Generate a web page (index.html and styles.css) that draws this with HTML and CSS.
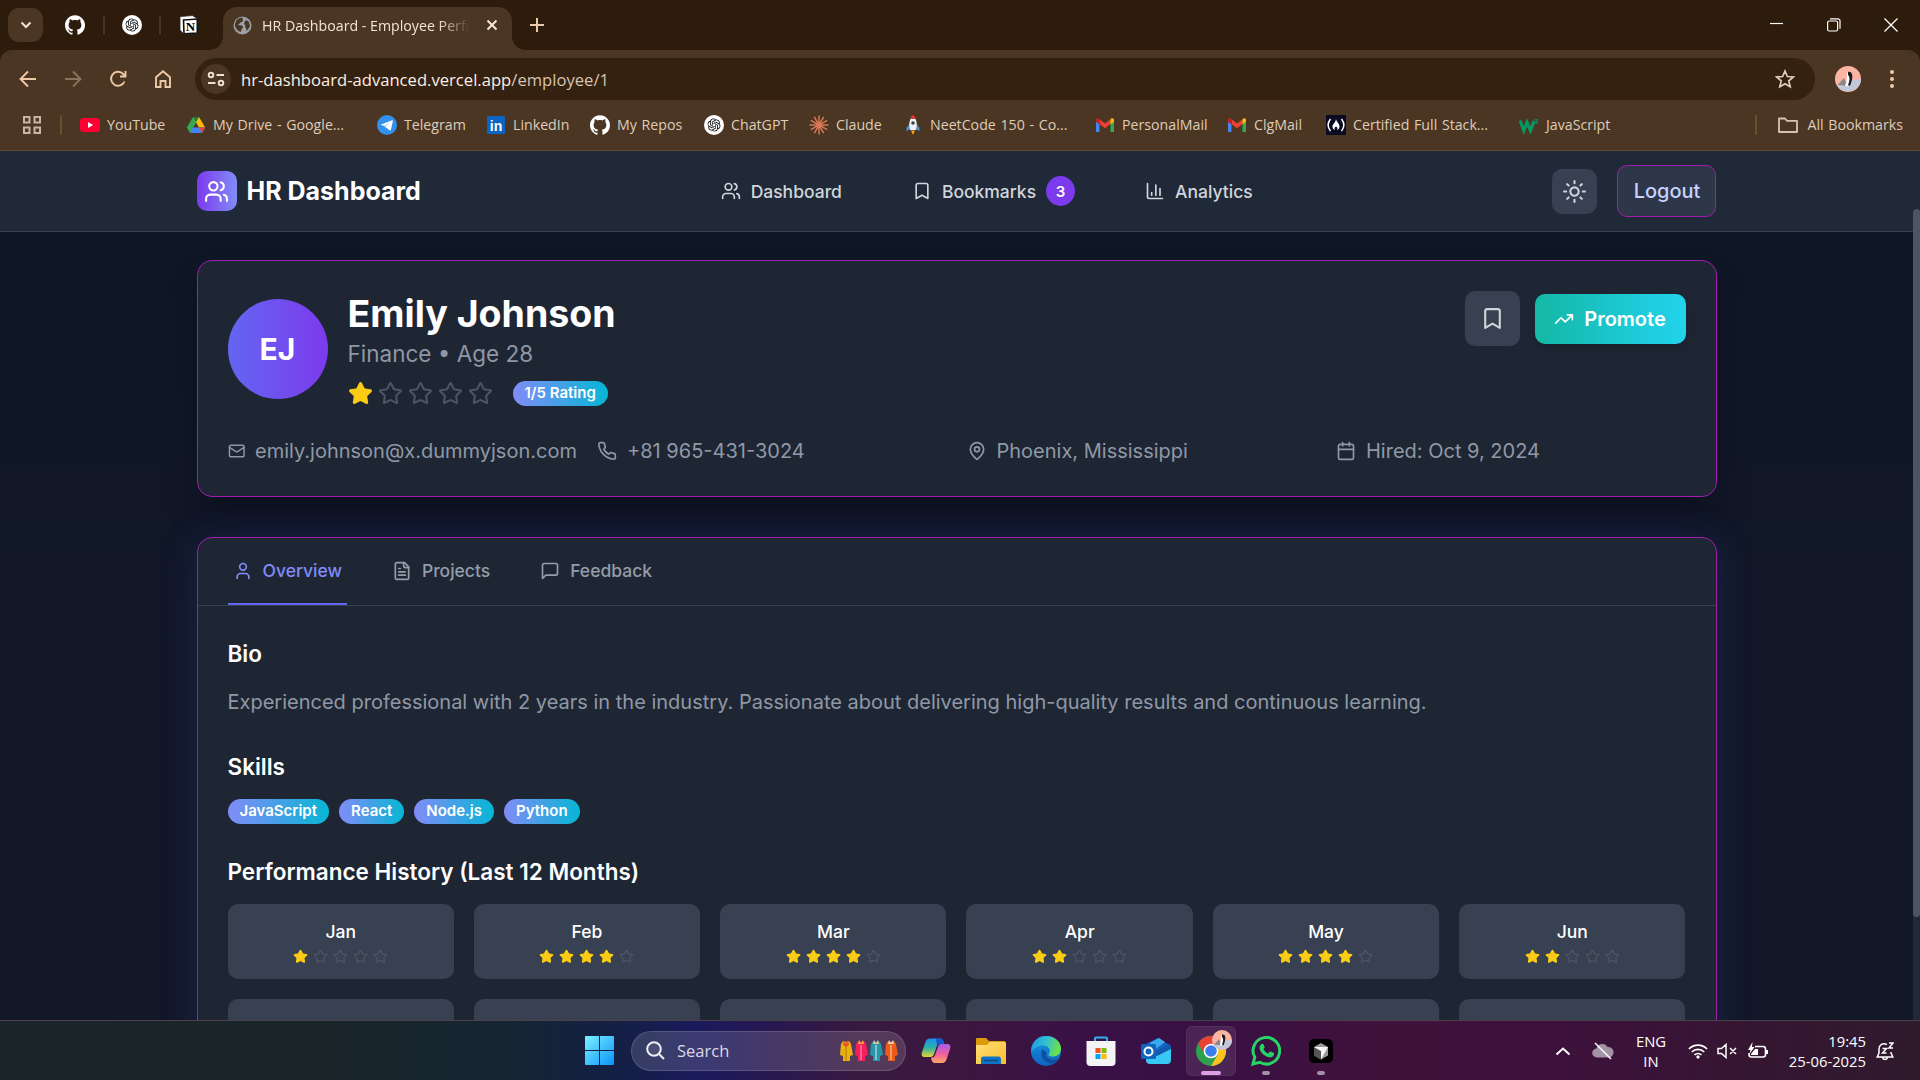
FILE: index.html
```html
<!DOCTYPE html>
<html lang="en">
<head>
<meta charset="utf-8">
<title>HR Dashboard - Employee Performance</title>
<link rel="stylesheet" href="styles.css">
</head>
<body>
<svg class="defs" aria-hidden="true">
  <defs>
    <linearGradient id="g-win" x1="0" y1="0" x2="1" y2="1"><stop offset="0" stop-color="#7df1ff"/><stop offset="1" stop-color="#0a93fb"/></linearGradient>
    <linearGradient id="g-folder" x1="0" y1="0" x2="1" y2="1"><stop offset="0" stop-color="#ffe07a"/><stop offset="1" stop-color="#fcbc2c"/></linearGradient>
    <linearGradient id="g-cop1" x1="0" y1="0" x2="0" y2="1"><stop offset="0" stop-color="#1f8ff0"/><stop offset=".5" stop-color="#2bb3a5"/><stop offset="1" stop-color="#e8d42a"/></linearGradient>
    <linearGradient id="g-cop2" x1="0" y1="0" x2="0" y2="1"><stop offset="0" stop-color="#a95cf0"/><stop offset=".55" stop-color="#f0609b"/><stop offset="1" stop-color="#ffa868"/></linearGradient>
    <linearGradient id="g-edge" x1="0" y1="0" x2="1" y2=".3"><stop offset="0" stop-color="#1c93e0"/><stop offset=".5" stop-color="#30bcd8"/><stop offset="1" stop-color="#6ae04e"/></linearGradient>
    <linearGradient id="g-edge2" x1="0" y1="0" x2="0" y2="1"><stop offset="0" stop-color="#1a9be6"/><stop offset="1" stop-color="#0d62bd"/></linearGradient>
  </defs>
  <symbol id="users" viewBox="0 0 24 24"><path d="M16 21v-2a4 4 0 0 0-4-4H6a4 4 0 0 0-4 4v2"/><circle cx="9" cy="7" r="4"/><path d="M22 21v-2a4 4 0 0 0-3-3.87M16 3.13a4 4 0 0 1 0 7.75"/></symbol>
  <symbol id="bookmark" viewBox="0 0 24 24"><path d="m19 21-7-4-7 4V5a2 2 0 0 1 2-2h10a2 2 0 0 1 2 2v16z"/></symbol>
  <symbol id="chart" viewBox="0 0 24 24"><path d="M3 3v16a2 2 0 0 0 2 2h16M18 17V9M13 17V5M8 17v-3"/></symbol>
  <symbol id="sun" viewBox="0 0 24 24"><circle cx="12" cy="12" r="4"/><path d="M12 2v2M12 20v2M4.93 4.93l1.41 1.41M17.66 17.66l1.41 1.41M2 12h2M20 12h2M6.34 17.66l-1.41 1.41M19.07 4.93l-1.41 1.41"/></symbol>
  <symbol id="trend" viewBox="0 0 24 24"><path d="m22 7-8.500 8.500-5-5L2 17M16 7h6v6"/></symbol>
  <symbol id="mail" viewBox="0 0 24 24"><rect x="2" y="4" width="20" height="16" rx="2"/><path d="m22 7-8.970 5.700a1.940 1.940 0 0 1-2.060 0L2 7"/></symbol>
  <symbol id="phone" viewBox="0 0 24 24"><path d="M22 16.920v3a2 2 0 0 1-2.180 2 19.790 19.790 0 0 1-8.630-3.070 19.500 19.500 0 0 1-6-6 19.790 19.790 0 0 1-3.070-8.670A2 2 0 0 1 4.110 2h3a2 2 0 0 1 2 1.720 12.840 12.840 0 0 0 .7 2.810 2 2 0 0 1-.45 2.110L8.090 9.910a16 16 0 0 0 6 6l1.270-1.270a2 2 0 0 1 2.110-.45 12.840 12.840 0 0 0 2.810.7A2 2 0 0 1 22 16.920z"/></symbol>
  <symbol id="pin" viewBox="0 0 24 24"><path d="M20 10c0 4.993-5.539 10.193-7.399 11.799a1 1 0 0 1-1.202 0C9.539 20.193 4 14.993 4 10a8 8 0 0 1 16 0"/><circle cx="12" cy="10" r="3"/></symbol>
  <symbol id="calendar" viewBox="0 0 24 24"><path d="M8 2v4M16 2v4M3 10h18"/><rect x="3" y="4" width="18" height="18" rx="2"/></symbol>
  <symbol id="user" viewBox="0 0 24 24"><path d="M19 21v-2a4 4 0 0 0-4-4H9a4 4 0 0 0-4 4v2"/><circle cx="12" cy="7" r="4"/></symbol>
  <symbol id="file" viewBox="0 0 24 24"><path d="M15 2H6a2 2 0 0 0-2 2v16a2 2 0 0 0 2 2h12a2 2 0 0 0 2-2V7Z"/><path d="M14 2v4a2 2 0 0 0 2 2h4M10 9H8M16 13H8M16 17H8"/></symbol>
  <symbol id="message" viewBox="0 0 24 24"><path d="M21 15a2 2 0 0 1-2 2H7l-4 4V5a2 2 0 0 1 2-2h14a2 2 0 0 1 2 2z"/></symbol>
  <symbol id="star" viewBox="0 0 24 24"><path d="M11.525 2.295a.53.53 0 0 1 .95 0l2.310 4.679a2.123 2.123 0 0 0 1.595 1.160l5.166.756a.53.53 0 0 1 .294.904l-3.736 3.638a2.123 2.123 0 0 0-.611 1.878l.882 5.140a.53.53 0 0 1-.771.560l-4.618-2.428a2.122 2.122 0 0 0-1.973 0L6.396 21.010a.53.53 0 0 1-.77-.560l.881-5.139a2.122 2.122 0 0 0-.611-1.879L2.160 9.795a.53.53 0 0 1 .294-.906l5.165-.755a2.122 2.122 0 0 0 1.597-1.160z"/></symbol>
  <symbol id="github" viewBox="0 0 24 24"><path fill="#fff" d="M12 .297c-6.630 0-12 5.373-12 12 0 5.303 3.438 9.800 8.205 11.385.6.113.82-.258.82-.577 0-.285-.01-1.040-.015-2.040-3.338.724-4.042-1.610-4.042-1.610C4.422 18.070 3.633 17.700 3.633 17.700c-1.087-.744.084-.729.084-.729 1.205.084 1.838 1.236 1.838 1.236 1.070 1.835 2.809 1.305 3.495.998.108-.776.417-1.305.76-1.605-2.665-.3-5.466-1.332-5.466-5.930 0-1.310.465-2.380 1.235-3.220-.135-.303-.54-1.523.105-3.176 0 0 1.005-.322 3.300 1.230.96-.267 1.980-.399 3-.405 1.020.006 2.040.138 3 .405 2.280-1.552 3.285-1.230 3.285-1.230.645 1.653.24 2.873.12 3.176.765.84 1.230 1.910 1.230 3.220 0 4.610-2.805 5.625-5.475 5.920.42.36.81 1.096.81 2.220 0 1.606-.015 2.896-.015 3.286 0 .315.21.69.825.57C20.565 22.092 24 17.592 24 12.297c0-6.627-5.373-12-12-12"/></symbol>
  <symbol id="openai" viewBox="0 0 32 32"><circle cx="16" cy="16" r="16" fill="#fff"/><path transform="translate(5.500 5.500) scale(.875)" fill="#111" d="M22.2819 9.8211a5.9847 5.9847 0 0 0-.5157-4.9108 6.0462 6.0462 0 0 0-6.5098-2.9A6.0651 6.0651 0 0 0 4.9807 4.1818a5.9847 5.9847 0 0 0-3.9977 2.9 6.0462 6.0462 0 0 0 .7427 7.0966 5.98 5.98 0 0 0 .511 4.9107 6.051 6.051 0 0 0 6.5146 2.9001A5.9847 5.9847 0 0 0 13.2599 24a6.0557 6.0557 0 0 0 5.7718-4.2058 5.9894 5.9894 0 0 0 3.9977-2.9001 6.0557 6.0557 0 0 0-.7475-7.0729zm-9.022 12.6081a4.4755 4.4755 0 0 1-2.8764-1.0408l.1419-.0804 4.7783-2.7582a.7948.7948 0 0 0 .3927-.6813v-6.7369l2.02 1.1686a.071.071 0 0 1 .038.052v5.5826a4.504 4.504 0 0 1-4.4945 4.4944zm-9.6607-4.1254a4.4708 4.4708 0 0 1-.5346-3.0137l.142.0852 4.783 2.7582a.7712.7712 0 0 0 .7806 0l5.8428-3.3685v2.3324a.0804.0804 0 0 1-.0332.0615L9.74 19.9502a4.4992 4.4992 0 0 1-6.1408-1.6464zM2.3408 7.8956a4.485 4.485 0 0 1 2.3655-1.9728V11.6a.7664.7664 0 0 0 .3879.6765l5.8144 3.3543-2.0201 1.1685a.0757.0757 0 0 1-.071 0l-4.8303-2.7865A4.504 4.504 0 0 1 2.3408 7.872zm16.5963 3.8558L13.1038 8.364 15.1192 7.2a.0757.0757 0 0 1 .071 0l4.8303 2.7913a4.4944 4.4944 0 0 1-.6765 8.1042v-5.6772a.79.79 0 0 0-.407-.667zm2.0107-3.0231l-.142-.0852-4.7735-2.7818a.7759.7759 0 0 0-.7854 0L9.409 9.2297V6.8974a.0662.0662 0 0 1 .0284-.0615l4.8303-2.7866a4.4992 4.4992 0 0 1 6.6802 4.66zM8.3065 12.863l-2.02-1.1638a.0804.0804 0 0 1-.038-.0567V6.0742a4.4992 4.4992 0 0 1 7.3757-3.4537l-.142.0805L8.704 5.459a.7948.7948 0 0 0-.3927.6813zm1.0976-2.3654l2.602-1.4998 2.6069 1.4998v2.9994l-2.5974 1.4997-2.6067-1.4997Z"/></symbol>
  <symbol id="gmail" viewBox="0 0 20 20"><path fill="#4285f4" d="M1 17h3.500V9L1 6.200z"/><path fill="#34a853" d="M15.500 17H19V6.200L15.500 9z"/><path fill="#ea4335" d="M4.500 9V4.200L10 8.500l5.500-4.300V9L10 13.200z"/><path fill="#c5221f" d="M1 5v1.800L4.500 9.400V4.200L3.700 3.500C2.500 2.700 1 3.500 1 5z"/><path fill="#fbbc04" d="M15.500 4.200v5.200L19 6.800V5c0-1.500-1.500-2.300-2.700-1.500z"/></symbol>
  <symbol id="penguin" viewBox="0 0 26 26"><circle cx="13" cy="13" r="13" fill="#fdb5a3"/><path fill="#c3c8d9" d="M26 13c0 14-21 17-24 5l7-3z"/><path fill="#8f8688" d="M2.500 19 9 12l4 8z"/><path fill="#fff" d="M12 7c3-1 5 2 4 7l-3 6h-3c2-5 2-8 2-13z"/><path fill="#1d1b20" d="M13 6c4-1 5 3 4 8l-2 6-2-1c2-5 2-8 0-10z"/></symbol>
</svg>

<header class="tabstrip">
  <div class="tab-search"><svg width="12" height="8" viewBox="0 0 12 8"><path d="m1.500 1.500 4.500 4.500 4.500-4.500" fill="none" stroke="#f3e3d4" stroke-width="2"/></svg></div>
  <div class="pinned"><svg width="20" height="20"><use href="#github"/></svg></div>
  <i class="sep"></i>
  <div class="pinned mid"><svg width="20" height="20"><use href="#openai"/></svg></div>
  <i class="sep"></i>
  <div class="pinned"><svg width="20" height="20" viewBox="0 0 20 20"><path d="M1 1.500 13.500.6 19 4v14.500L5 19.500 1 15z" fill="#fff" stroke="#222" stroke-width=".8"/><path d="M4.500 5 18.300 4v14L5 18.800z" fill="#fff" stroke="#111" stroke-width="1.600"/><text x="11.500" y="16" text-anchor="middle" class="notion-n">N</text></svg></div>
  <div class="tab">
    <svg width="19" height="19" viewBox="0 0 19 19"><circle cx="9.500" cy="9.500" r="9" fill="#9aa0a6"/><path fill="#4b3623" d="M3 5c2-3 5-3.500 7-3-1 2 1 2.500-1 4-2 0-2 2-4 2.500 1 1.500 4 0 5 2 0 2-2 2-2 5.500C4 15 1.500 11 2 8zM12 5c2-1 3 0 4 1l1 4c-1 2-2 4-4 5 1-2 0-3-1-4 1-2 0-2-1-3z"/></svg>
    <span class="tab-title">HR Dashboard - Employee Performance</span>
    <svg width="12" height="12" viewBox="0 0 12 12"><path d="m1.500 1.500 9 9m0-9-9 9" stroke="#f7e9dc" stroke-width="1.900"/></svg>
  </div>
  <svg class="new-tab" width="14" height="14" viewBox="0 0 14 14"><path d="M7 0v14M0 7h14" stroke="#e9c9a9" stroke-width="2"/></svg>
  <div class="window-controls">
    <svg width="14" height="14" viewBox="0 0 14 14"><path d="M0 5.500h13" stroke="#fff" stroke-width="1.200"/></svg>
    <svg width="14" height="14" viewBox="0 0 14 14" fill="none" stroke="#fff" stroke-width="1.200"><rect x=".6" y="3" width="10" height="10" rx="1.500"/><path d="M3 .8h8a2 2 0 0 1 2 2v8"/></svg>
    <svg width="14" height="14" viewBox="0 0 14 14"><path d="m.5.5 13 13m0-13-13 13" stroke="#fff" stroke-width="1.300"/></svg>
  </div>
</header>

<div class="toolbar">
  <svg class="tool" viewBox="0 0 20 20"><path d="M18 10H3M10 2.500 2.500 10l7.500 7.500"/></svg>
  <svg class="tool off" viewBox="0 0 20 20"><path d="M2 10h15M10 2.500l7.500 7.500-7.500 7.500"/></svg>
  <svg class="tool" viewBox="0 0 20 20"><path d="M16.500 12.500A7 7 0 1 1 15.200 5L17.500 7.300M17.500 2v5.500H12"/></svg>
  <svg class="tool" viewBox="0 0 20 20"><path d="M3 8.200 10 2.200l7 6V18h-4.500v-6h-5v6H3z"/></svg>
  <div class="omnibox">
    <span class="site"><svg width="18" height="16" viewBox="0 0 18 16" fill="none" stroke="#f0dfd0" stroke-width="1.900"><circle cx="4" cy="4" r="2.300"/><path d="M9.500 4H17M1 12h7.500"/><circle cx="14" cy="12" r="2.300"/></svg></span>
    <span class="url">hr-dashboard-advanced.vercel.app<b>/employee/1</b></span>
    <svg width="20" height="20" viewBox="0 0 20 20"><path d="m10 2 2.400 5.500 5.900.5-4.500 3.900 1.400 5.900L10 14.700l-5.200 3.100 1.400-5.900L1.700 8l5.900-.5z" fill="none" stroke="#e0cdbb" stroke-width="1.700"/></svg>
  </div>
  <svg class="profile" width="26" height="26"><use href="#penguin"/></svg>
  <svg width="6" height="20" viewBox="0 0 6 20" fill="#efc9a5"><circle cx="3" cy="3" r="2"/><circle cx="3" cy="10" r="2"/><circle cx="3" cy="17" r="2"/></svg>
</div>

<nav class="bookmarks">
  <svg width="20" height="20" viewBox="0 0 20 20" fill="none" stroke="#c9b5a1" stroke-width="2"><path d="M2 2h5.500v5.500H2zM12.500 2H18v5.500h-5.500zM2 12.500h5.500V18H2zM12.500 12.500H18V18h-5.500z"/></svg>
  <i class="sep"></i>
  <div class="bm-list">
    <span class="bm"><svg viewBox="0 0 20 20"><rect y="3" width="20" height="14" rx="3.500" fill="#ff0033"/><path d="m8 7 5 3-5 3z" fill="#fff"/></svg>YouTube</span>
    <span class="bm"><svg viewBox="0 0 20 20"><path fill="#34a853" d="M7 2h0l3.300 5.500L4 18 .8 12.500z"/><path fill="#fbbc04" d="M7 2h6l6.200 10.500h-6.200z"/><path fill="#4285f4" d="m4 18 2.500-5.500h12.700L16 18z"/><path fill="#ea4335" d="m13 12.500h6.200L16 18z"/><path fill="#188038" d="m7 2 3 5.300L13 2z"/></svg>My Drive - Google...</span>
    <span class="bm"><svg viewBox="0 0 20 20"><circle cx="10" cy="10" r="10" fill="#3390ec"/><path fill="#fff" d="m3.500 9.800 11.500-4.600c.7-.2 1 .2.8 1l-1.900 8.500c-.2.800-.7.900-1.300.500l-5.400-4.100z"/><path d="m7.500 11 5.500-3.700-4.300 4.500-.2 2.600z" fill="#a8cbf1"/></svg>Telegram</span>
    <span class="bm"><svg viewBox="0 0 20 20"><rect x="1" y="1" width="18" height="18" rx="1.500" fill="#0a66c2"/><text x="10" y="15.500" text-anchor="middle" class="in">in</text></svg>LinkedIn</span>
    <span class="bm"><svg><use href="#github"/></svg>My Repos</span>
    <span class="bm"><svg><use href="#openai"/></svg>ChatGPT</span>
    <span class="bm"><svg viewBox="0 0 20 20" stroke="#d97757" stroke-width="1.500"><path d="M10 .5v19M.5 10h19M5.300 1.800l9.400 16.400M14.700 1.800 5.300 18.200M1.800 5.300l16.400 9.400M1.800 14.700l16.400-9.400"/></svg>Claude</span>
    <span class="bm"><svg viewBox="0 0 20 20"><path fill="#3b9ae8" d="M6.500 9 3.500 13v3l3-1.500zM13.500 9l3 4v3l-3-1.500z"/><path fill="#eef1f5" d="M10 1c4 3 4.500 9 3 14H7C5.500 10 6 4 10 1z"/><path fill="#e0383e" d="M10 0c1.500 1 2.200 2.500 2.700 4H7.300C7.800 2.500 8.500 1 10 0z"/><circle cx="10" cy="8" r="1.800" fill="#37474f"/><path fill="#fba51f" d="M8 15.500h4L10 20z"/></svg>NeetCode 150 - Co...</span>
    <span class="bm"><svg><use href="#gmail"/></svg>PersonalMail</span>
    <span class="bm"><svg><use href="#gmail"/></svg>ClgMail</span>
    <span class="bm"><svg viewBox="0 0 20 20"><path fill="#0a0a23" d="M0 0h20v20H0z"/><path d="M4.500 4C1.300 8 1.300 12 4.500 16M15.500 4c3.200 4 3.200 8 0 12" fill="none" stroke="#fff" stroke-width="1.500"/><path fill="#fff" d="M10 4c.5 3 3.500 4.500 3.500 7.500 0 2-1 3-2.500 3.500 1-1.500.5-2.500-1-3.500-1.500 1-2 2-1 3.500-1.500-.5-2.500-1.500-2.500-3.500C6.500 9 9.500 8 10 4z"/></svg>Certified Full Stack...</span>
    <span class="bm"><svg viewBox="0 0 20 20"><path d="m1 5.500 3.800 10L8 7.500l3.500 8L15 6" fill="none" stroke="#059862" stroke-width="3.200"/><text x="15" y="8.500" class="cube">3</text></svg>JavaScript</span>
  </div>
  <i class="sep"></i>
  <span class="bm all"><svg viewBox="0 0 22 20"><path d="M2 3.500h6l2 2.300h10V17H2z" fill="none" stroke="#d5c3b2" stroke-width="1.800" stroke-linejoin="round"/></svg>All Bookmarks</span>
</nav>

<div class="viewport">
<div class="page">
  <header class="app-header">
    <div class="brand"><span class="logo"><svg class="ic lg"><use href="#users"/></svg></span>HR Dashboard</div>
    <nav class="app-nav">
      <a><svg class="ic"><use href="#users"/></svg>Dashboard</a>
      <a><svg class="ic"><use href="#bookmark"/></svg>Bookmarks<span class="count">3</span></a>
      <a><svg class="ic"><use href="#chart"/></svg>Analytics</a>
    </nav>
    <div class="app-actions">
      <button class="theme"><svg class="ic lg"><use href="#sun"/></svg></button>
      <button class="logout">Logout</button>
    </div>
  </header>

  <main>
    <section class="card profile-card">
      <div class="profile-top">
        <div class="avatar">EJ</div>
        <div class="who">
          <h1>Emily Johnson</h1>
          <p>Finance • Age 28</p>
          <div class="rating">
            <span class="stars"><svg class="on"><use href="#star"/></svg><svg><use href="#star"/></svg><svg><use href="#star"/></svg><svg><use href="#star"/></svg><svg><use href="#star"/></svg></span>
            <span class="pill">1/5 Rating</span>
          </div>
        </div>
        <div class="profile-actions">
          <button class="save"><svg class="ic lg"><use href="#bookmark"/></svg></button>
          <button class="promote"><svg class="ic"><use href="#trend"/></svg>Promote</button>
        </div>
      </div>
      <div class="contacts">
        <span><svg class="ic narrow"><use href="#mail"/></svg>emily.johnson@x.dummyjson.com</span>
        <span><svg class="ic"><use href="#phone"/></svg>+81 965-431-3024</span>
        <span><svg class="ic"><use href="#pin"/></svg>Phoenix, Mississippi</span>
        <span><svg class="ic"><use href="#calendar"/></svg>Hired: Oct 9, 2024</span>
      </div>
    </section>

    <section class="card details">
      <nav class="tabs">
        <a class="active"><svg class="ic"><use href="#user"/></svg>Overview</a>
        <a><svg class="ic"><use href="#file"/></svg>Projects</a>
        <a><svg class="ic"><use href="#message"/></svg>Feedback</a>
      </nav>
      <div class="overview">
        <div><h2>Bio</h2><p class="bio">Experienced professional with 2 years in the industry. Passionate about delivering high-quality results and continuous learning.</p></div>
        <div><h2>Skills</h2><div class="skills"><span class="pill">JavaScript</span><span class="pill">React</span><span class="pill">Node.js</span><span class="pill">Python</span></div></div>
        <div><h2>Performance History (Last 12 Months)</h2>
          <div class="months">
            <div class="month">Jan<span class="stars sm"><svg class="on"><use href="#star"/></svg><svg><use href="#star"/></svg><svg><use href="#star"/></svg><svg><use href="#star"/></svg><svg><use href="#star"/></svg></span></div>
            <div class="month">Feb<span class="stars sm"><svg class="on"><use href="#star"/></svg><svg class="on"><use href="#star"/></svg><svg class="on"><use href="#star"/></svg><svg class="on"><use href="#star"/></svg><svg><use href="#star"/></svg></span></div>
            <div class="month">Mar<span class="stars sm"><svg class="on"><use href="#star"/></svg><svg class="on"><use href="#star"/></svg><svg class="on"><use href="#star"/></svg><svg class="on"><use href="#star"/></svg><svg><use href="#star"/></svg></span></div>
            <div class="month">Apr<span class="stars sm"><svg class="on"><use href="#star"/></svg><svg class="on"><use href="#star"/></svg><svg><use href="#star"/></svg><svg><use href="#star"/></svg><svg><use href="#star"/></svg></span></div>
            <div class="month">May<span class="stars sm"><svg class="on"><use href="#star"/></svg><svg class="on"><use href="#star"/></svg><svg class="on"><use href="#star"/></svg><svg class="on"><use href="#star"/></svg><svg><use href="#star"/></svg></span></div>
            <div class="month">Jun<span class="stars sm"><svg class="on"><use href="#star"/></svg><svg class="on"><use href="#star"/></svg><svg><use href="#star"/></svg><svg><use href="#star"/></svg><svg><use href="#star"/></svg></span></div>
            <div class="month"></div><div class="month"></div><div class="month"></div><div class="month"></div><div class="month"></div><div class="month"></div>
          </div>
        </div>
      </div>
    </section>
  </main>
</div>
<div class="scrollbar"><div class="thumb"></div></div>
</div>

<footer class="taskbar">
  <svg class="start" width="29" height="29" viewBox="0 0 29 29"><path fill="url(#g-win)" d="M1 0h13v14H0V1a1 1 0 0 1 1-1zM15 0h13a1 1 0 0 1 1 1v13H15zM0 15h14v14H1a1 1 0 0 1-1-1zM15 15h14v13a1 1 0 0 1-1 1H15z"/></svg>
  <div class="search">
    <svg width="19" height="19" viewBox="0 0 19 19" fill="none" stroke="#f1edf6" stroke-width="2"><circle cx="8" cy="8" r="6.800" fill="#ffffff18"/><path d="m13 13 5 5"/></svg>
    <span>Search</span>
    <svg class="kurtas" width="60" height="22" viewBox="0 0 60 22">
      <g><path fill="#e8b012" d="m4 1 3 1 3-1 2 3 2 11-3 1v5H4v-5l-3-1L2 4z"/><path fill="#f0522e" d="m5 0 2 4 2-4 1 5-3 2-3-2z"/><path d="M7 6v14" stroke="#a86f00" stroke-width=".8"/></g>
      <g transform="translate(15)"><path fill="#f51f60" d="m4 1 3 1 3-1 2 3 2 11-3 1v5H4v-5l-3-1L2 4z"/><path fill="#ffa040" d="m5 0 2 3 2-3 1 4H4z"/><path d="M7 5v15" stroke="#ff86a8" stroke-width="1.200"/></g>
      <g transform="translate(30)"><path fill="#2697a8" d="m4 1 3 1 3-1 2 3 2 11-3 1v5H4v-5l-3-1L2 4z"/><path fill="#ddc8a0" d="m5 0 2 3 2-3 1 4H4z"/><path d="M7 5v15" stroke="#bce8e4" stroke-width="1.200"/></g>
      <g transform="translate(45)"><path fill="#ec5a1c" d="m4 1 3 1 3-1 2 3 2 11-3 1v5H4v-5l-3-1L2 4z"/><path fill="#e9d9bd" d="m5 0 2 3 2-3 1 4H4z"/><path d="M7 5v15" stroke="#ffc090" stroke-width="1.200"/></g>
    </svg>
  </div>
  <div class="apps">
    <span><svg width="30" height="30" viewBox="0 0 30 30"><path fill="url(#g-cop1)" d="M9 2.500h10c2 0 3 1.500 3.500 3L23 8h-4c-2 0-3 1-3.500 3L13 18c-.6 2-1.500 3-3.500 3H4c-3 0-4-2-3-5L4.500 6C5.300 3.700 6.500 2.500 9 2.500z"/><path fill="#1659c9" d="M15 2.500h4c2 0 3 1.500 3.500 3L23 8h-4c-1.500 0-2.500.5-3 2z"/><path fill="url(#g-cop2)" d="M21 27H14c-2 0-3-1.500-3.500-3L10 21.500h1c2 0 2.600-1 3.200-3L17 11c.6-2 1.500-3 3.500-3H26c3 0 4 2 3 5L25.500 23.500c-.8 2.300-2 3.500-4.500 3.500z"/></svg></span>
    <span><svg width="30" height="30" viewBox="0 0 30 30"><path fill="#dc9b08" d="M1 2h9l3 3h16v6H0V3a1 1 0 0 1 1-1z"/><path fill="url(#g-folder)" d="M0 9h11l3-3h15a1 1 0 0 1 1 1v21H0z"/><path fill="#1173c4" d="M5 28v-5a2.500 2.500 0 0 1 2.500-2.500h15A2.500 2.500 0 0 1 25 23v5z"/><path d="M8 24.500h14" stroke="#0b4a8d" stroke-width="1.500"/></svg></span>
    <span><svg width="30" height="30" viewBox="0 0 30 30"><circle cx="15" cy="15" r="15" fill="url(#g-edge2)"/><path fill="url(#g-edge)" d="M.5 12C2 4.500 8 0 15 0c9 0 15 6 15 12.500 0 5-3.500 8-8 8-3.500 0-5.500-1.300-4-3 2.500-3.500-.5-8-5.500-8C7.500 9.500 2 12 .3 17z"/><path fill="#11509f" d="M11 13c-3 8 3 15 12 14.500 3-1.500 4.500-3.500 5-5.500-4 2.500-9 2-11.500-.5-2-2-1.500-4-1-5z"/></svg></span>
    <span><svg width="30" height="30" viewBox="0 0 30 30"><path d="M9 6V2.500C9 2 9.500 1.500 10 1.500h10c.5 0 1 .5 1 1V6" fill="none" stroke="#2fb3ec" stroke-width="2"/><path fill="#f4f3f5" d="M.5 5h29v21a4 4 0 0 1-4 4h-21a4 4 0 0 1-4-4z"/><path fill="#f1511b" d="M9.500 12h5v5h-5z"/><path fill="#80bb03" d="M15.500 12h5v5h-5z"/><path fill="#03a5f0" d="M9.500 18h5v5h-5z"/><path fill="#ffba08" d="M15.500 18h5v5h-5z"/></svg></span>
    <span><svg width="30" height="30" viewBox="0 0 30 30"><path fill="#1469c7" d="M5 8 17 2l13 8v8H5z"/><path fill="#3ba9ed" d="M9 7 18 2l6 4-12 9z"/><path fill="#38c8f4" d="M5 18h8l17-8v14a4 4 0 0 1-4 4H9a4 4 0 0 1-4-4z"/><path fill="#1259ad" d="M10 18 28 8l2 2v3L16 20z"/><rect y="8" width="15" height="15" rx="1.500" fill="#0f65bd"/><circle cx="7.500" cy="15.500" r="4" fill="none" stroke="#fff" stroke-width="2"/></svg></span>
    <span class="current"><svg width="50" height="50" viewBox="0 0 50 50"><g transform="translate(10 10)"><circle cx="15" cy="15" r="15" fill="#2da14d"/><path fill="#e94235" d="M2 7.500A15 15 0 0 1 28 7.500L15 9.500 8.500 18z"/><path fill="#fcc31e" d="M28 7.500A15 15 0 0 1 15 30l6.500-11L20 9z"/><circle cx="15" cy="15" r="7.300" fill="#fff"/><circle cx="15" cy="15" r="5.800" fill="#3b7ded"/></g><use href="#penguin" x="26" y="4" width="20" height="20"/></svg></span>
    <span class="open"><svg width="30" height="30" viewBox="0 0 30 30"><path d="M2 28 3.800 21.300A13.300 13.300 0 1 1 8.800 26.300z" fill="none" stroke="#26d367" stroke-width="3"/><path fill="#26d367" d="M10.500 8c1-.5 1.800-.3 2.200.7l.9 2.200c.3.700-.3 1.300-1.100 2.200 1 2 2.500 3.500 4.700 4.500l1.500-1.800c.4-.5.9-.4 1.500-.1l2.200 1.100c.8.400.8.800.5 2-.6 2-3 3-5 2.500-5-1.300-8.700-5-9.400-9-.2-1.600.8-3.600 2-4.300z"/></svg></span>
    <span class="open"><svg width="24" height="24" viewBox="0 0 24 24"><rect width="24" height="24" rx="5" fill="#000"/><path fill="#999" d="m12 4 7 4v8.500L12 20.500l-7-4V8z"/><path fill="#555" d="m5 8 7 4v8.500l-7-4z"/><path fill="#f5f5f5" d="M5 8h14l-7 12.500V12z"/></svg></span>
  </div>
  <div class="tray">
    <span><svg width="16" height="10" viewBox="0 0 16 10"><path d="m1.500 8.500 6.500-6 6.500 6" fill="none" stroke="#fff" stroke-width="2"/></svg></span>
    <span><svg width="22" height="18" viewBox="0 0 22 18"><path fill="#a493a5" d="M5 15.500a4.500 4.500 0 0 1-.5-9A6 6 0 0 1 15.500 5a5 5 0 0 1 1.500 10.500z"/><path d="m3 1 16 16" stroke="#fff" stroke-width="1.500"/></svg></span>
    <span class="lang">ENG<br>IN</span>
    <span><svg width="20" height="16" viewBox="0 0 20 16" fill="none" stroke="#fff" stroke-width="1.700"><path d="M1 6a12.500 12.500 0 0 1 18 0M3.800 9a8.500 8.500 0 0 1 12.400 0M6.500 12a5 5 0 0 1 7 0"/><circle cx="10" cy="14" r="1.200" fill="#fff" stroke-width="1"/></svg></span>
    <span><svg width="20" height="16" viewBox="0 0 20 16" fill="none" stroke="#fff" stroke-width="1.500"><path d="M1 5.500h3.500L9 1.500v13L4.500 10.500H1zM13 5l6 6m0-6-6 6"/></svg></span>
    <span><svg width="20" height="18" viewBox="0 0 20 18"><path d="M7 4.500h8a2.500 2.500 0 0 1 2.500 2.500v5.500A2.500 2.500 0 0 1 15 15H3.500A2.500 2.500 0 0 1 1 12.500V11" fill="none" stroke="#fff" stroke-width="1.600"/><path fill="#fff" d="M3 13h7V7H7l-4 5zM4.500 0 0 8h2.500L1.500 12 6.500 5H4zM18 8h2v4h-2z"/></svg></span>
    <span class="clock">19:45<br>25-06-2025</span>
    <span><svg width="18" height="20" viewBox="0 0 18 20" fill="none" stroke="#fff" stroke-width="1.500"><path d="M11 3.500C6 1.500 3 4.500 3 8v4l-1.800 4h15.600L15 12v-1M6.500 16.500c.5 2.500 4.500 2.500 5 0M6.500 7.500h4l-4 4.500h4M13 2h4l-4 5h4"/></svg></span>
  </div>
</footer>
</body>
</html>
```
FILE: styles.css
```css
* { box-sizing: border-box; }
body {
  margin: 0; width: 1920px; height: 1080px; overflow: hidden;
  display: grid; grid-template-columns: 1920px; grid-template-rows: 50px 58px 43px 869px 60px;
  font-family: "Inter", sans-serif; background: #2d1b0b;
}
h1, h2, p { margin: 0; }
svg { display: block; flex: none; }
.defs { position: absolute; width: 0; height: 0; }
button { border: 0; font: inherit; padding: 0; }

/* browser chrome */
.tabstrip, .toolbar, .bookmarks, .taskbar { font-family: "Open Sans", "Noto Sans", sans-serif; }
.tabstrip { display: flex; align-items: flex-start; padding-left: 8px; background: #2d1b0b; }
.tab-search { width: 35px; height: 34px; margin: 8px 4px 0 0; border-radius: 11px; background: #4b3623; display: grid; place-items: center; }
.pinned { width: 56px; height: 34px; margin-top: 8px; display: grid; place-items: center; }
.pinned.mid { width: 54px; }
.sep { width: 2px; height: 20px; background: #65502f; border-radius: 1px; flex: none; }
.tabstrip .sep { margin-top: 15px; background: #4b3623; }
.notion-n { font: bold 13px "Liberation Serif", serif; fill: #000; }
.tab {
  position: relative; width: 289px; height: 43px; margin: 7px 0 0 6px; padding: 0 14px 7px 10px;
  background: #4b3623; border-radius: 14px 14px 0 0;
  display: flex; align-items: center; gap: 10px;
}
.tab::before, .tab::after { content: ""; position: absolute; bottom: 0; width: 13px; height: 13px; }
.tab::before { left: -13px; background: radial-gradient(circle at 0 0, transparent 12.5px, #4b3623 13px); }
.tab::after { right: -13px; background: radial-gradient(circle at 100% 0, transparent 12.5px, #4b3623 13px); }
.tab-title {
  flex: 1; white-space: nowrap; overflow: hidden; font-size: 14.200px; color: #f3e4d6;
  mask-image: linear-gradient(90deg, #000 84%, transparent 99%); margin-right: 4px;
}
.new-tab { margin: 18px 0 0 18px; }
.window-controls { margin-left: auto; display: flex; gap: 43px; padding: 18px 22px 0 0; }
.toolbar { display: flex; align-items: center; padding: 0 25px 0 18px; background: #4b3623; border-radius: 12px 12px 0 0; }
.tool { width: 20px; height: 20px; margin-right: 25px; fill: none; stroke: #efc9a5; stroke-width: 1.900; }
.tool.off { stroke: #8a745f; }
.omnibox { flex: none; width: 1620px; height: 42px; margin-left: -3px; border-radius: 21px; background: #34210f; display: flex; align-items: center; padding: 0 20px 0 6px; }
.site { width: 30px; height: 30px; border-radius: 50%; background: #4b3623; display: grid; place-items: center; }
.url { flex: 1; margin-left: 10px; font-size: 16.600px; color: #fbefe4; letter-spacing: .01px; }
.url b { font-weight: 400; color: #d6c4b3; }
.profile { margin: 0 28px 0 20px; }
.bookmarks { display: flex; align-items: center; padding: 0 17px 9px 22px; background: #4b3623; border-bottom: 1px solid #5d4a35; color: #dfccba; font-size: 14.200px; }
.bookmarks > .sep { margin-left: 18px; }
.bm-list { margin-left: 18px; flex: 1; display: grid; grid-template-columns: 106px 191px 109px 104px 114px 105px 94px 192px 132px 99px 193px 1fr; }
.bm { display: flex; align-items: center; gap: 7px; white-space: nowrap; word-spacing: 1px; line-height: 22px; }
.bm svg { width: 20px; height: 20px; }
.bm.all { margin-left: 20px; gap: 8px; }
.bm.all svg { width: 22px; }
.in { font: bold 14px "Liberation Sans", sans-serif; fill: #fff; }
.cube { font: bold 8px "Liberation Sans", sans-serif; fill: #059862; }

/* page */
.viewport { display: grid; grid-template-columns: 1913px 7px; overflow: hidden; background: #111827; }
.page { height: 869px; overflow: hidden; background: linear-gradient(180deg, #0f1626, #121828 60%); }
.scrollbar { background: #1f2937; padding-top: 58px; }
.thumb { height: 708px; border-radius: 4px; background: #4b5563; }
.ic { width: 20px; height: 20px; fill: none; stroke: currentColor; stroke-width: 2; stroke-linecap: round; stroke-linejoin: round; }
.ic.lg { width: 25px; height: 25px; }
.app-header { height: 81px; padding: 0 196.500px; display: flex; justify-content: space-between; align-items: center; background: #202937; border-bottom: 1px solid #374151; }
.brand { display: flex; align-items: center; gap: 10px; font-size: 25px; font-weight: 700; color: #fff; }
.logo { width: 40px; height: 40px; border-radius: 10px; display: grid; place-items: center; background: linear-gradient(90deg, #7c3aed, #818cf8); }
.logo .ic { margin-right: 1px; }
.app-nav { display: flex; gap: 70px; font-size: 17.500px; font-weight: 500; color: #d1d5db; }
.app-nav a { display: flex; align-items: center; gap: 10px; height: 30px; }
.count { width: 29px; height: 30px; border-radius: 50%; background: #7c3aed; color: #fff; font-size: 15px; font-weight: 600; display: grid; place-items: center; }
.app-actions { display: flex; align-items: center; gap: 20px; }
.theme { width: 45px; height: 45px; border-radius: 10px; background: #374151; color: #d1d5db; display: grid; place-items: center; }
.logout { width: 99px; height: 52px; border-radius: 10px; border: 1px solid #a21caf; background: #2d3748; color: #c7d2fe; font-size: 20px; font-weight: 500; }

main { padding: 28px 196.500px 0; display: flex; flex-direction: column; gap: 40px; }
.card { border: 1px solid #a21caf; border-radius: 15px; background: #1e2634; }
.profile-card { padding: 30px; height: 237px; box-shadow: 0 20px 30px rgba(5, 8, 16, .35); }
.profile-top { display: flex; align-items: flex-start; margin-bottom: 30px; height: 115px; }
.avatar { width: 100px; height: 100px; margin: 8px 20px 0 0; border-radius: 50%; background: linear-gradient(90deg, #6366f1, #7c3aed); color: #fff; font-size: 30px; font-weight: 700; display: grid; place-items: center; }
.who { flex: 1; }
.who h1 { font-size: 37.500px; line-height: 45px; font-weight: 700; color: #fff; }
.who p { font-size: 22.500px; line-height: 35px; color: #8f97a4; }
.rating { display: flex; align-items: center; gap: 20px; margin-top: 10px; height: 25px; }
.stars { display: flex; gap: 5px; }
.stars svg { width: 25px; height: 25px; fill: none; stroke: #4b5563; stroke-width: 2; stroke-linejoin: round; }
.stars .on { fill: #facc15; stroke: #facc15; }
.stars.sm svg { width: 15px; height: 15px; }
.pill { height: 25px; padding: 0 12px; border-radius: 13px; background: linear-gradient(90deg, #818cf8, #06b6d4); color: #fff; font-size: 15px; line-height: 24px; font-weight: 600; }
.profile-actions { display: flex; align-items: center; gap: 15px; }
.save { width: 55px; height: 55px; border-radius: 10px; background: #374151; color: #d1d5db; display: grid; place-items: center; }
.promote { width: 151px; height: 50px; border-radius: 10px; background: linear-gradient(90deg, #14b8a6, #22d3ee); color: #fff; font-size: 20px; font-weight: 600; display: flex; align-items: center; justify-content: center; gap: 10px; box-shadow: 0 4px 8px rgba(0, 0, 0, .15); }
.contacts { display: grid; grid-template-columns: repeat(4, 1fr); gap: 20px; font-size: 20px; line-height: 30px; }
.contacts span { display: flex; align-items: center; gap: 10px; min-width: 0; white-space: nowrap; color: #9098a5; }
.contacts .narrow { width: 17.500px; }

.details { box-shadow: 0 0 38px rgba(60, 72, 190, .2); height: 700px; }
.tabs { display: flex; gap: 40px; padding: 0 30px; height: 68px; border-bottom: 1px solid #374151; }
.tabs a { display: flex; gap: 10px; padding: 20px 5px; height: 67px; line-height: 25px; font-size: 17.500px; font-weight: 500; color: #959da9; border-bottom: 2px solid transparent; }
.tabs .ic { margin-top: 3px; }
.tabs .active { color: #818cf8; border-color: #6366f1; }
.overview { padding: 30px; display: flex; flex-direction: column; gap: 30px; }
.overview h2 { font-size: 22.500px; line-height: 35px; font-weight: 600; color: #fff; margin-bottom: 15px; }
.bio { font-size: 20px; line-height: 32.500px; color: #9098a5; }
.skills { display: flex; gap: 10px; }
.months { display: grid; grid-template-columns: repeat(6, 1fr); gap: 20px; }
.month { height: 75px; padding-top: 15px; border-radius: 10px; background: #374151; color: #fff; font-size: 17.500px; font-weight: 500; line-height: 25px; text-align: center; }
.month .stars { justify-content: center; margin-top: 5px; }

/* taskbar */
.taskbar {
  display: flex; align-items: center; padding: 0 16px 0 585px; border-top: 1px solid #4b4148; color: #fff;
  background: linear-gradient(90deg, #1b2428 0, #1a2529 320px, #152532 500px, #141f45 620px, #1b1a5c 700px, #29184f 780px, #381a40 860px, #3d163f 960px, #391146 1080px, #3a1044 1220px, #40113b 1380px, #3d113c 1560px, #351632 1750px, #2f1a2d 1920px);
}
.search { width: 275px; height: 40px; margin: 0 2px 0 17px; padding: 0 6px 0 14px; border-radius: 20px; border: 1px solid rgba(255, 255, 255, .14); background: rgba(255, 255, 255, .14); display: flex; align-items: center; font-size: 16.500px; color: #ddd8e6; }
.search span { flex: 1; margin-left: 12px; }
.apps { display: flex; }
.apps span { position: relative; width: 55px; height: 50px; display: grid; place-items: center; }
.apps .current { width: 50px; margin: 0 2.500px; border-radius: 6px; background: rgba(255, 255, 255, .09); box-shadow: inset 0 0 0 1px rgba(255, 255, 255, .05); }
.apps .current::after, .apps .open::after { content: ""; position: absolute; left: 50%; bottom: 1px; width: 8px; height: 4px; margin-left: -4px; border-radius: 2px; background: #a08fa6; }
.apps .current::after { width: 20px; margin-left: -10px; background: #dc9fe6; }
.tray { margin-left: auto; display: grid; grid-template-columns: 40px 40px 56px 38px 20px 42px 87px 38px; align-items: center; justify-items: center; font-size: 14.800px; line-height: 20px; }
.lang { text-align: center; }
.clock { justify-self: end; text-align: right; white-space: nowrap; }
```
